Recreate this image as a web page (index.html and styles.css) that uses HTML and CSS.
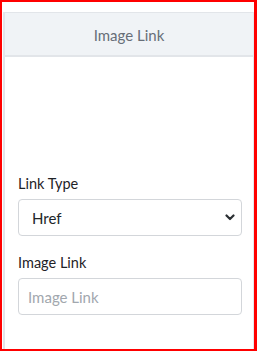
FILE: index.html
```html
<!DOCTYPE html>
<html lang="en">
<head>
    <meta charset="UTF-8">
    <meta name="viewport" content="width=device-width, initial-scale=1.0">
    <title>Image Link</title>
    <link rel="stylesheet" href="styles.css">
</head>
<body>
    <div class="frame">
        <div class="panel">
            <div class="panel-header">
                <h2>Image Link</h2>
            </div>

            <form class="panel-body">
                <div class="form-group">
                    <label for="linkType">Link Type</label>
                    <div class="select-wrap">
                        <select id="linkType" name="linkType">
                            <option>Href</option>
                            <option>Route</option>
                        </select>
                        <svg class="chevron" width="10" height="7" viewBox="0 0 10 7">
                            <path d="M1.5 1.5 L5 5 L8.5 1.5" fill="none" stroke="#2b2f33" stroke-width="2.2" stroke-linecap="round" stroke-linejoin="round"/>
                        </svg>
                    </div>
                </div>

                <div class="form-group">
                    <label for="imageLink">Image Link</label>
                    <input type="text" id="imageLink" name="imageLink" placeholder="Image Link">
                </div>
            </form>
        </div>
    </div>
</body>
</html>
```

FILE: styles.css
```css
* {
    margin: 0;
    padding: 0;
    box-sizing: border-box;
}

html, body {
    height: 100%;
}

body {
    font-family: Lato, 'Open Sans', sans-serif;
    background: white;
}

.frame {
    height: 351px;
    border-style: solid;
    border-color: #ff0000;
    border-width: 2px 3px 2px 2px;
    padding: 10px 0 0 1px;
    display: flex;
}

.panel {
    flex: 1;
    border-left: 2px solid #e1e5ea;
    border-right: 1px solid #e4e7eb;
    display: flex;
    flex-direction: column;
}

.panel-header {
    height: 45px;
    background: #f0f3f6;
    border-top: 1px solid #e2e5e9;
    border-bottom: 2px solid #e2e5e9;
    display: flex;
    align-items: center;
    justify-content: center;
}

.panel-header h2 {
    font-size: 15px;
    font-weight: 400;
    color: #676e78;
    padding-top: 1px;
}

.panel-body {
    padding: 117px 11px 0 13px;
}

.form-group {
    margin-bottom: 17px;
}

label {
    display: block;
    font-size: 14.5px;
    line-height: 20px;
    color: #1f2327;
    margin-bottom: 5px;
}

.select-wrap {
    position: relative;
}

select,
input[type="text"] {
    width: 100%;
    height: 37px;
    border: 1px solid #d3d6da;
    border-radius: 4px;
    background: white;
    font-family: inherit;
    font-size: 15px;
    color: #212529;
    outline: none;
}

select {
    appearance: none;
    -webkit-appearance: none;
    padding-left: 13px;
}

input[type="text"] {
    padding-left: 9px;
}

input::placeholder {
    color: #a2a7ae;
}

.chevron {
    position: absolute;
    right: 7px;
    top: 15px;
}
```
